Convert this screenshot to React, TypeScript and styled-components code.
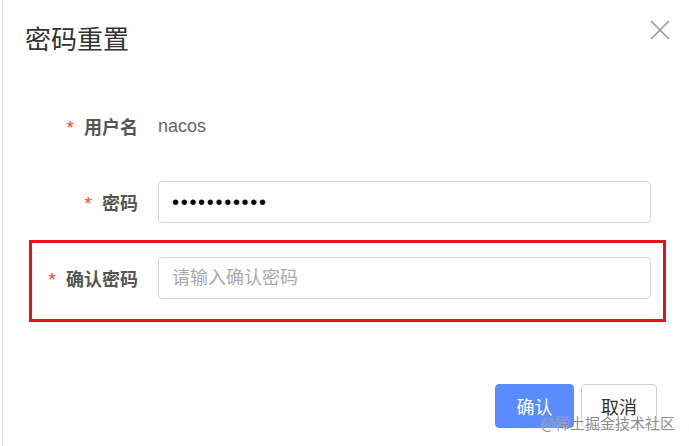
import React from "react";
import styled, { createGlobalStyle } from "styled-components";

const GlobalStyle = createGlobalStyle`
  html, body {
    margin: 0;
    padding: 0;
    background: #fff;
  }
  body {
    font-family: "Liberation Sans", "Noto Sans CJK SC", sans-serif;
  }
`;

const fields = [
  { label: "用户名", kind: "text" as const, value: "nacos" },
  { label: "密码", kind: "password" as const, value: "nacos123456" },
  { label: "确认密码", kind: "input" as const, placeholder: "请输入确认密码", marked: true },
];

function App() {
  return (
    <>
      <GlobalStyle />
      <Dialog>
        <Header>
          <Title>密码重置</Title>
          <CloseButton aria-label="close">
            <svg width="20" height="20" viewBox="0 0 20 20">
              <path d="M1 1 L19 19 M19 1 L1 19" stroke="#999" strokeWidth="1.6" fill="none" />
            </svg>
          </CloseButton>
        </Header>
        <Form>
          {fields.map((f) => (
            <Row key={f.label} marked={f.marked}>
              <Label>
                <Star>*</Star>
                {f.label}
              </Label>
              {f.kind === "text" && <Plain>{f.value}</Plain>}
              {f.kind === "password" && <Input type="password" value={f.value} readOnly />}
              {f.kind === "input" && <Input type="text" placeholder={f.placeholder} readOnly />}
            </Row>
          ))}
        </Form>
        <Footer>
          <Button primary>确认</Button>
          <Button>取消</Button>
          <Watermark>@稀土掘金技术社区</Watermark>
        </Footer>
      </Dialog>
    </>
  );
}

const Dialog = styled.div`
  margin-left: 2px;
  width: 687px;
  height: 446px;
  border-left: 1px solid #e6e6e6;
  box-sizing: border-box;
  background: #fff;
  font-family: "Liberation Sans", "Noto Sans CJK SC", sans-serif;
`;

const Header = styled.div`
  display: flex;
  align-items: flex-start;
  justify-content: space-between;
  padding: 22px 19px 0 22px;
  height: 88px;
  box-sizing: border-box;
`;

const Title = styled.h2`
  margin: 0;
  font-size: 26px;
  line-height: 32px;
  font-weight: normal;
  color: #333;
  font-family: "Noto Sans CJK SC", sans-serif;
`;

const CloseButton = styled.button`
  border: 0;
  background: none;
  padding: 0;
  margin-top: -2px;
  width: 20px;
  height: 20px;
  cursor: pointer;
  svg {
    display: block;
  }
`;

const Form = styled.div`
  display: flex;
  flex-direction: column;
  padding-left: 26px;
  width: 637px;
`;

const Row = styled.div<{ marked?: boolean }>`
  display: grid;
  grid-template-columns: 106px 1fr;
  column-gap: 20px;
  align-items: center;
  height: 42px;
  padding: ${(p) => (p.marked ? "14px 12px 20px 0" : "14px 12px 14px 0")};
  border: 3px solid ${(p) => (p.marked ? "#e3141e" : "transparent")};
`;

const Label = styled.label`
  text-align: right;
  font-size: 18px;
  font-weight: bold;
  color: #555;
  font-family: "Noto Sans CJK SC", sans-serif;
  white-space: nowrap;
`;

const Star = styled.span`
  color: #f5461f;
  margin-right: 10px;
  font-family: "Liberation Sans", sans-serif;
  font-weight: normal;
  font-size: 19px;
`;

const Plain = styled.span`
  font-size: 18px;
  color: #666;
  padding-top: 1px;
`;

const Input = styled.input`
  height: 42px;
  box-sizing: border-box;
  width: 100%;
  border: 1px solid #d6d6d6;
  border-radius: 4px;
  padding: 0 13px;
  font-size: 18px;
  color: #000;
  font-family: "Liberation Sans", "Noto Sans CJK SC", sans-serif;
  outline: none;
  &[type="password"] {
    letter-spacing: 1.7px;
    font-size: 20px;
  }
  &::placeholder {
    color: #aaa;
    font-family: "Noto Sans CJK SC", sans-serif;
  }
`;

const Footer = styled.div`
  position: relative;
  display: flex;
  justify-content: flex-end;
  gap: 7px;
  margin-top: 62px;
  padding-right: 32px;
`;

const Button = styled.button<{ primary?: boolean }>`
  height: 44px;
  width: ${(p) => (p.primary ? "79px" : "76px")};
  border-radius: 4px;
  font-size: 18px;
  font-family: "Noto Sans CJK SC", sans-serif;
  border: 1px solid ${(p) => (p.primary ? "#5a8cff" : "#cfcfcf")};
  background: ${(p) => (p.primary ? "#5a8cff" : "#fff")};
  color: ${(p) => (p.primary ? "#fff" : "#333")};
  padding: 0;
  cursor: pointer;
`;

const Watermark = styled.span`
  position: absolute;
  right: 14px;
  top: 28px;
  font-size: 15px;
  color: rgba(110, 110, 110, 0.8);
  font-family: "Noto Sans CJK SC", sans-serif;
  text-shadow: 0 0 1px rgba(255, 255, 255, 0.9);
  pointer-events: none;
`;

export default App;
